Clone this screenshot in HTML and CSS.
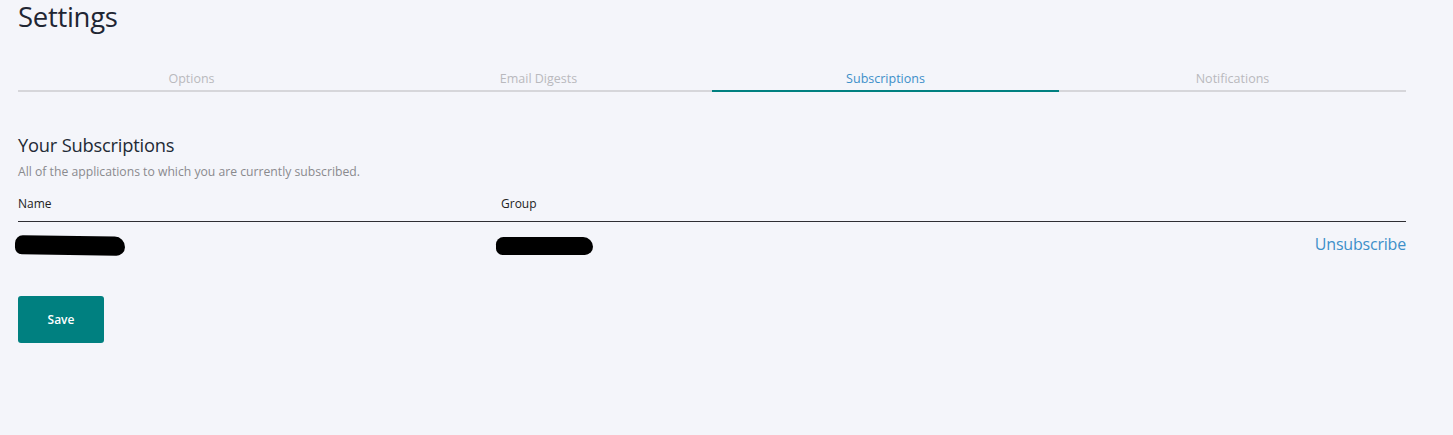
FILE: index.html
```html
<!DOCTYPE html>
<html lang="en">
<head>
<meta charset="utf-8">
<title>Settings</title>
<link rel="stylesheet" href="styles.css">
</head>
<body>
<main class="page">
  <h1 class="title">Settings</h1>
  <nav class="tabs">
    <a class="tab">Options</a>
    <a class="tab">Email Digests</a>
    <a class="tab active">Subscriptions</a>
    <a class="tab">Notifications</a>
  </nav>
  <section class="section">
    <h2 class="section-title">Your Subscriptions</h2>
    <p class="section-sub">All of the applications to which you are currently subscribed.</p>
    <div class="table">
      <div class="row head">
        <div class="cell">Name</div>
        <div class="cell">Group</div>
        <div class="cell"></div>
      </div>
      <div class="row body">
        <div class="cell"><span class="redact redact-name"></span></div>
        <div class="cell"><span class="redact redact-group"></span></div>
        <div class="cell action"><a class="link">Unsubscribe</a></div>
      </div>
    </div>
    <button class="btn-save">Save</button>
  </section>
</main>
</body>
</html>
```

FILE: styles.css
```css
html, body {
  margin: 0;
  padding: 0;
  background: #f4f5fa;
}
body {
  font-family: "Open Sans", "Noto Sans", sans-serif;
  color: #222;
}
.page {
  padding: 0 47px 0 18px;
}
.title {
  margin: 0;
  padding-top: 0;
  font-size: 27.5px;
  font-weight: 400;
  line-height: 34px;
  color: #1f2633;
  letter-spacing: -0.3px;
}
.tabs {
  margin-top: 35px;
  display: grid;
  grid-template-columns: repeat(4, 1fr);
  border-bottom: 2px solid #d6d6da;
}
.tab {
  text-align: center;
  font-size: 12.5px;
  line-height: 20px;
  padding-bottom: 1px;
  color: #b9b9bd;
  margin-bottom: -2px;
  border-bottom: 2px solid transparent;
}
.tab.active {
  color: #3d8fc9;
  border-bottom-color: #008080;
}
.section {
  padding-top: 41px;
}
.section-title {
  margin: 0;
  font-size: 18.3px;
  font-weight: 400;
  line-height: 24px;
  color: #222a35;
  letter-spacing: -0.2px;
}
.section-sub {
  margin: 7px 0 0;
  font-size: 12.2px;
  line-height: 16px;
  color: #8a8a8e;
}
.table {
  margin-top: 16px;
}
.row {
  display: grid;
  grid-template-columns: 483px 1fr auto;
  align-items: center;
}
.row.head {
  font-size: 12px;
  line-height: 16px;
  padding-bottom: 9px;
  border-bottom: 1px solid #2e2e33;
  color: #222;
}
.row.body {
  height: 47px;
}
.redact {
  display: block;
  background: #000;
  border-radius: 9px 12px 10px 8px;
}
.redact-name {
  width: 110px;
  height: 19px;
  margin-left: -3px;
  transform: rotate(0.8deg);
}
.redact-group {
  width: 97px;
  height: 18px;
  margin-left: -5px;
}
.action {
  text-align: right;
  padding-bottom: 3px;
}
.link {
  font-size: 16px;
  color: #3d8fc9;
  letter-spacing: -0.2px;
  cursor: pointer;
}
.btn-save {
  margin-top: 27px;
  width: 86px;
  height: 47px;
  border: none;
  border-radius: 3px;
  background: #008080;
  color: #fff;
  font-family: "Open Sans", "Noto Sans", sans-serif;
  font-size: 12px;
  font-weight: 600;
}
```
